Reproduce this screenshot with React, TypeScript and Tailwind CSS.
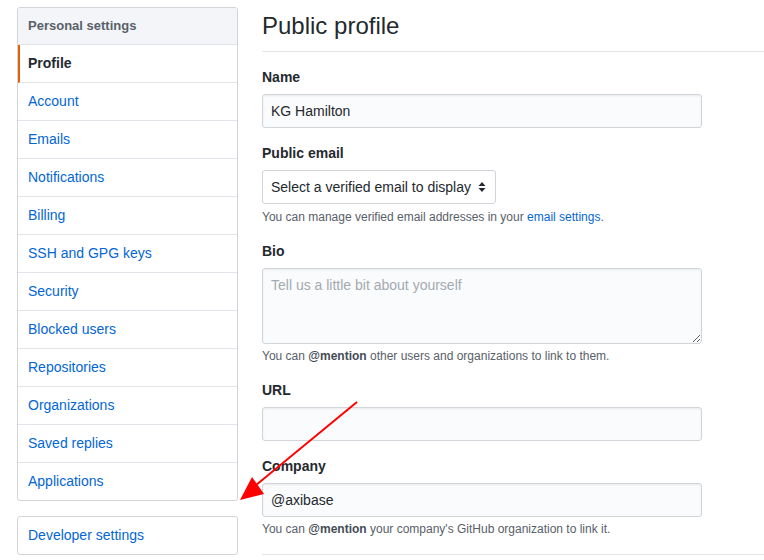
import React from 'react'

const items = [
  'Account',
  'Emails',
  'Notifications',
  'Billing',
  'SSH and GPG keys',
  'Security',
  'Blocked users',
  'Repositories',
  'Organizations',
  'Saved replies',
  'Applications',
]

const inputCls =
  'block w-[440px] h-[34px] rounded-[3px] border border-[#d1d5da] bg-[#fafbfc] px-[8px] text-[14px] text-[#24292e] shadow-[inset_0_1px_2px_rgba(27,31,35,0.075)] outline-none'

const Label = ({ children }: { children: React.ReactNode }) => (
  <div className="text-[14px] leading-[20px] font-bold text-[#24292e] mb-[7px]">{children}</div>
)

const Note = ({ children }: { children: React.ReactNode }) => (
  <div className="mt-[3px] text-[12px] leading-[18px] text-[#586069]">{children}</div>
)

const App = () => {
  return (
    <div className="relative w-[764px] h-[560px] overflow-hidden bg-white font-['Liberation_Sans',Arial,sans-serif] text-[#24292e]">
      <div className="flex">
        {/* sidebar */}
        <div className="ml-[17px] mt-[7px] w-[221px] shrink-0">
          <nav className="rounded-[3px] border border-[#d1d5da] overflow-hidden">
            <div className="h-[37px] flex items-center px-[10px] bg-[#f3f5f8] border-b border-[#e1e4e8] text-[13px] font-bold text-[#586069]">
              Personal settings
            </div>
            <div className="h-[38px] flex items-center pl-[8px] border-b border-[#e1e4e8] border-l-[2px] border-l-[#e36209] text-[14px] font-bold text-[#24292e]">
              Profile
            </div>
            {items.map((it, i) => (
              <div
                key={it}
                className={
                  i === items.length - 1
                    ? 'h-[37px] flex items-center px-[10px] text-[14px] text-[#0366d6]'
                    : 'h-[38px] flex items-center px-[10px] border-b border-[#e1e4e8] text-[14px] text-[#0366d6]'
                }
              >
                {it}
              </div>
            ))}
          </nav>
          <div className="mt-[15px] h-[39px] rounded-[3px] border border-[#d1d5da] flex items-center px-[10px] text-[14px] text-[#0366d6]">
            Developer settings
          </div>
        </div>

        {/* main */}
        <div className="ml-[24px] flex-1">
          <div className="pt-[11px] pb-[10px] border-b border-[#e1e4e8]">
            <h2 className="text-[24px] leading-[30px] font-normal text-[#24292e]">Public profile</h2>
          </div>

          <div className="mt-[15px]">
            <Label>Name</Label>
            <input className={inputCls} defaultValue="KG Hamilton" />
          </div>

          <div className="mt-[15px]">
            <Label>Public email</Label>
            <div className="w-[234px] h-[34px] rounded-[3px] border border-[#d1d5da] bg-white flex items-center justify-between pl-[8px] pr-[9px] text-[14px] text-[#24292e]">
              <span>Select a verified email to display</span>
              <svg width="8" height="12" viewBox="0 0 8 12">
                <path d="M4 1 L7.5 5 L0.5 5 Z M4 11 L7.5 7 L0.5 7 Z" fill="#24292e" />
              </svg>
            </div>
            <div className="mt-[4px] text-[12px] leading-[18px] text-[#586069]">
              You can manage verified email addresses in your <span className="text-[#0366d6]">email settings</span>.
            </div>
          </div>

          <div className="mt-[15px]">
            <Label>Bio</Label>
            <textarea
              className="block w-[440px] h-[76px] rounded-[3px] border border-[#d1d5da] bg-[#fafbfc] px-[8px] py-[6px] text-[14px] leading-[20px] text-[#24292e] placeholder:text-[#a3aab1] shadow-[inset_0_1px_2px_rgba(27,31,35,0.075)] outline-none"
              placeholder="Tell us a little bit about yourself"
            />
            <Note>
              You can <b className="text-[#444d56]">@mention</b> other users and organizations to link to them.
            </Note>
          </div>

          <div className="mt-[15px]">
            <Label>URL</Label>
            <input className={inputCls} defaultValue="" />
          </div>

          <div className="mt-[15px]">
            <Label>Company</Label>
            <input className={inputCls} defaultValue="@axibase" />
            <Note>
              You can <b className="text-[#444d56]">@mention</b> your company's GitHub organization to link it.
            </Note>
          </div>

          <div className="mt-[16px] border-t border-[#e1e4e8]" />
        </div>
      </div>

      {/* annotation arrow */}
      <svg className="absolute left-0 top-0 pointer-events-none" width="764" height="560">
        <line x1="357" y1="402" x2="250" y2="490" stroke="#ff0000" strokeWidth="2" />
        <polygon points="240,500 252,477 264,494" fill="#ff0000" />
      </svg>
    </div>
  )
}

export default App
